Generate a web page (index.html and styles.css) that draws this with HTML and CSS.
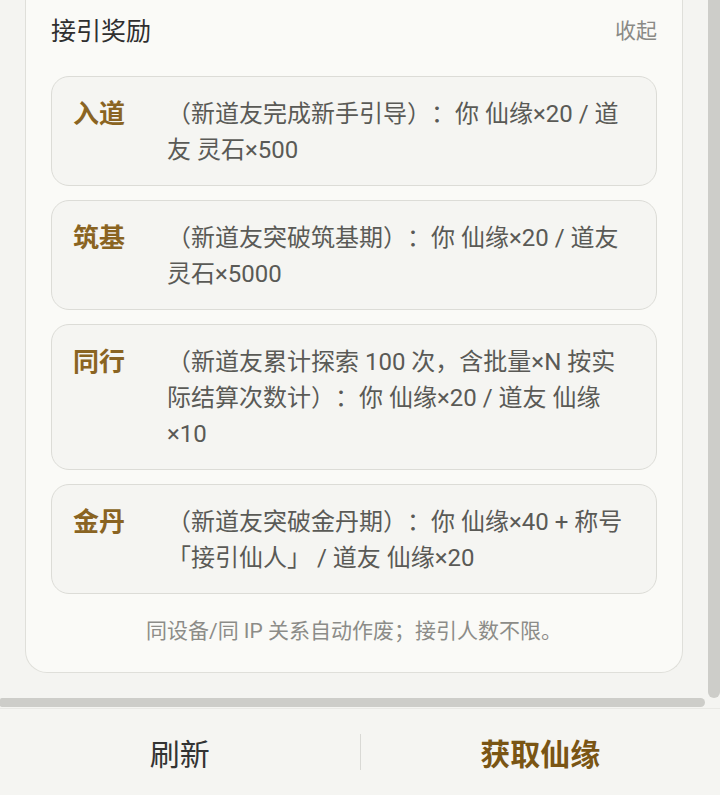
FILE: index.html
```html
<!DOCTYPE html>
<html>
<head>
  <meta charset="utf-8">
  <title>接引奖励</title>
  <link rel="stylesheet" href="styles.css">
</head>
<body>
  <div id="page">
    <div id="scroll-area">
      <div id="scroll-row">
        <div id="content">
          <div class="card">
            <div class="card-head">
              <span class="card-title">接引奖励</span>
              <span class="card-toggle">收起</span>
            </div>
            <ul class="reward-list">
              <li class="reward">
                <span class="reward-name">入道</span>
                <span class="reward-desc">（新道友完成新手引导）：你 仙缘×20 / 道友 灵石×500</span>
              </li>
              <li class="reward">
                <span class="reward-name">筑基</span>
                <span class="reward-desc">（新道友突破筑基期）：你 仙缘×20 / 道友 灵石×5000</span>
              </li>
              <li class="reward">
                <span class="reward-name">同行</span>
                <span class="reward-desc">（新道友累计探索 100 次，含批量×N 按实际结算次数计）：你 仙缘×20 / 道友 仙缘×10</span>
              </li>
              <li class="reward">
                <span class="reward-name">金丹</span>
                <span class="reward-desc">（新道友突破金丹期）：你 仙缘×40 + 称号「接引仙人」 / 道友 仙缘×20</span>
              </li>
            </ul>
            <p class="card-note">同设备/同 IP 关系自动作废；接引人数不限。</p>
          </div>
        </div>
        <div class="vbar"></div>
      </div>
      <div class="hbar-track"><div class="hbar"></div></div>
    </div>
    <div id="footer">
      <button class="foot-btn">刷新</button>
      <span class="foot-divider"></span>
      <button class="foot-btn primary">获取仙缘</button>
    </div>
  </div>
</body>
</html>
```

FILE: styles.css
```css
/* referral rewards panel */
body {
  margin: 0;
  padding: 0;
  background-color: #f4f4f1;
  font-family: Roboto, "Noto Sans CJK SC", sans-serif;
  color: #333;
  text-spacing-trim: space-all;
}

#page {
  width: 720px;
  height: 795px;
  display: flex;
  flex-direction: column;
  overflow: hidden;
}

#scroll-area {
  height: 708px;
  display: flex;
  flex-direction: column;
}

#scroll-row {
  display: flex;
  height: 698px;
}

#content {
  width: 708px;
  padding: 0 25px;
  box-sizing: border-box;
}

.vbar {
  width: 12px;
  height: 698px;
  background-color: #cdcdc9;
  border-radius: 0 0 6px 6px;
}

.hbar-track {
  height: 10px;
}

.hbar {
  width: 705px;
  height: 9px;
  background-color: #cdcdc9;
  border-radius: 2px 5px 5px 2px;
}

.card {
  background-color: #fafaf7;
  border: 1.5px solid #dfdfda;
  border-top: none;
  border-radius: 0 0 22px 22px;
  padding: 11px 25px 23px 25px;
}

.card-head {
  display: flex;
  justify-content: space-between;
  align-items: center;
  height: 36px;
  margin-bottom: 29px;
}

.card-title {
  font-size: 25px;
  color: #2f2f2f;
}

.card-toggle {
  font-size: 21px;
  color: #8a8a86;
}

.reward-list {
  list-style-type: none;
  margin: 0;
  padding: 0;
}

.reward {
  display: flex;
  background-color: #f5f5f2;
  border: 1.5px solid #dcdcd7;
  border-radius: 18px;
  padding: 19px 22px 17px 21px;
  margin-bottom: 14px;
}

.reward:last-child {
  margin-bottom: 0;
}

.reward-name {
  flex-shrink: 0;
  width: 94px;
  font-size: 26px;
  font-weight: bold;
  line-height: 36px;
  color: #8a6422;
}

.reward-desc {
  flex: 1;
  font-size: 24px;
  line-height: 36px;
  color: #5a5a56;
}

.card-note {
  margin: 19px 0 0 0;
  text-align: center;
  font-size: 21px;
  line-height: 36px;
  color: #8c8c88;
}

#footer {
  flex: 1;
  display: flex;
  align-items: center;
  background-color: #f5f5f2;
  border-top: 1px solid #e9e9e5;
}

.foot-btn {
  flex: 1;
  border: none;
  background: none;
  font-family: inherit;
  font-size: 30px;
  color: #333;
  padding: 0;
  cursor: pointer;
}

.foot-btn.primary {
  font-weight: bold;
  color: #7a5514;
}

.foot-divider {
  width: 1px;
  height: 36px;
  background-color: #d9d9d5;
}
```
